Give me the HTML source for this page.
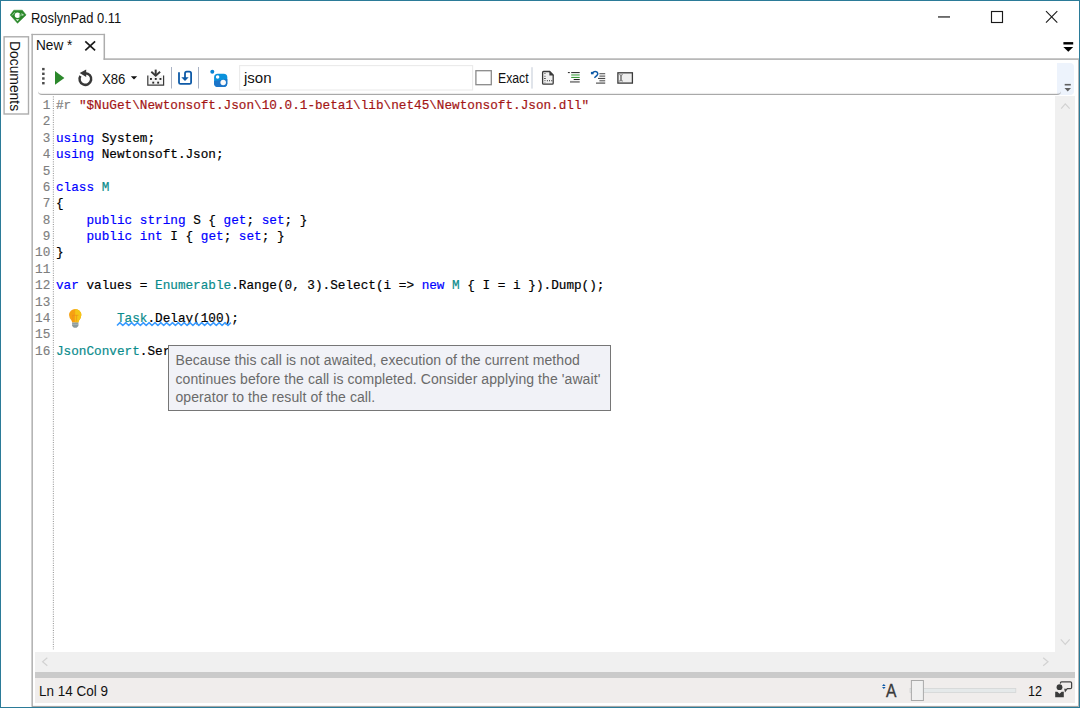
<!DOCTYPE html>
<html>
<head>
<meta charset="utf-8">
<title>RoslynPad 0.11</title>
<style>
html,body{margin:0;padding:0;}
body{width:1080px;height:708px;overflow:hidden;background:#fff;position:relative;
  font-family:"Liberation Sans",sans-serif;font-size:14px;color:#000;}
.abs{position:absolute;}
.ui{position:absolute;white-space:pre;font-family:"Liberation Sans",sans-serif;font-size:14px;line-height:16px;
  transform-origin:0 0;color:#111;}
svg{position:absolute;overflow:visible;}
/* window frame */
#frame{left:0;top:0;width:1078px;height:706px;border:1px solid #2b7b98;pointer-events:none;}
/* code */
#code{left:56px;top:98.1px;-webkit-text-stroke:0.2px;font-family:"Liberation Mono",monospace;font-size:13.6px;line-height:16.37px;
  white-space:pre;transform-origin:0 0;transform:scaleX(0.9337);color:#000;}
#nums{left:20px;top:98.1px;width:30.3px;font-family:"Liberation Mono",monospace;font-size:13.6px;line-height:16.37px;
  white-space:pre;color:#7e7e7e;text-align:right;-webkit-text-stroke:0.15px;}
#nums span{display:block;transform-origin:100% 0;transform:scaleX(0.9337);}
.k{color:#0000ff;}
.t{color:#0a8c8c;}
.s{color:#a31515;}
.g{color:#808080;}
</style>
</head>
<body>
<!-- TITLE BAR -->
<div id="titlebar" class="abs" style="left:1px;top:1px;width:1078px;height:33px;background:#fff;"></div>
<svg style="left:9px;top:9.3px" width="18" height="16" viewBox="9 9 18 16">
  <path d="M13.8 10.2 H22.3 L26.1 15 L17.5 23.3 L10.2 15 Z" fill="#2a882a" stroke="#2a882a" stroke-width="0.5" stroke-linejoin="round"/>
  <circle cx="17.5" cy="15.35" r="2.75" fill="#fff"/>
  <path d="M19.7 13.7 v3.4" stroke="#8fc78f" stroke-width="1" fill="none"/>
  <path d="M15.8 19.2 h3.4 l-1.7 2.1z" fill="#e2f1e2"/>
  <path d="M12 15.5 L14.8 12.3" stroke="#b2d9b2" stroke-width="0.9" fill="none"/>
  <path d="M21.4 13 L24.2 15 L21.6 16z" fill="#b4dab4"/>
</svg>
<div class="ui" id="t_title" style="left:31px;top:10.4px;transform:scaleX(0.922)">RoslynPad 0.11</div>
<svg style="left:930px;top:4px" width="140" height="26" viewBox="930 4 140 26">
  <rect x="938" y="16.35" width="12" height="1.2" fill="#1a1a1a"/>
  <rect x="991.5" y="11.5" width="11" height="11" fill="none" stroke="#1a1a1a" stroke-width="1.15"/>
  <path d="M1046 11.2 L1057.3 22.7 M1057.3 11.2 L1046 22.7" stroke="#1a1a1a" stroke-width="1.1" fill="none"/>
</svg>
<!-- SIDE TAB -->

<div class="ui" id="t_docs" style="left:23.2px;top:41px;transform:rotate(90deg) scaleX(0.99);">Documents</div>
<!-- DOC TAB -->

<div class="ui" id="t_new" style="left:35.5px;top:36.8px;transform:scaleX(0.975)">New *</div>
<svg style="left:84px;top:40px" width="13" height="12" viewBox="84 40 13 12">
  <path d="M85.3 41.4 L95.1 50.4 M95.1 41.4 L85.3 50.4" stroke="#1a1a1a" stroke-width="1.7" fill="none"/>
</svg>
<svg style="left:1062px;top:41px" width="13" height="12" viewBox="1062 41 13 12">
  <rect x="1063.4" y="42.1" width="9.8" height="2.4" fill="#000"/>
  <path d="M1063.4 46.9 H1073.2 L1068.3 51.8 Z" fill="#000"/>
</svg>
<!-- PANEL -->
<svg style="left:0;top:0" width="1080" height="708" viewBox="0 0 1080 708">
  <rect x="4.1" y="36.8" width="24.4" height="77.2" fill="none" stroke="#adadad" stroke-width="1.4"/>
  <g fill="#adadad">
    <rect x="31.45" y="33.85" width="73.6" height="1.25"/>
    <rect x="31.45" y="33.85" width="1.45" height="673"/>
    <rect x="103.55" y="33.85" width="1.5" height="26"/>
    <rect x="103.55" y="58.35" width="975.5" height="1.5"/>
    <rect x="32" y="705.9" width="1047" height="1" fill="#9c9c9c"/>
    <rect x="1078" y="59" width="1" height="648" fill="#b4b4b4"/>
  </g>
</svg>
<!-- TOOLBAR -->
<div class="abs" style="left:1056.5px;top:63px;width:17.5px;height:31.7px;background:#edf3fc;border-radius:0 4px 4px 0;"></div>
<div class="abs" style="left:38px;top:60px;width:1023px;height:34px;border-bottom:1.2px solid #a9a9a9;border-radius:0 0 4px 4px;background:linear-gradient(to bottom,rgba(0,0,0,0) 0,rgba(0,0,0,0) 32.4px,rgba(0,0,0,0.1) 34px);"></div>
<svg style="left:36px;top:60px" width="1040" height="36" viewBox="36 60 1040 36">
  <!-- grip -->
  <g fill="#4a4a4a">
    <rect x="42.1" y="67.9" width="2.5" height="2.4"/><rect x="42.1" y="72.6" width="2.5" height="2.4"/>
    <rect x="42.1" y="77.3" width="2.5" height="2.4"/><rect x="42.1" y="82" width="2.5" height="2.4"/>
  </g>
  <!-- play -->
  <path d="M55 71 L64.4 77.9 L55 84.8 Z" fill="#2c882c"/>
  <!-- restart -->
  <path d="M85.4 73.15 A5.85 5.85 0 1 1 80.4 75.9" stroke="#383838" stroke-width="2.5" fill="none"/>
  <path d="M79.7 72.9 L86.2 69.5 L86.2 76.9 Z" fill="#383838"/>
  <!-- dropdown arrow -->
  <path d="M130.8 76.3 H137.2 L134 79.6 Z" fill="#111"/>
  <!-- format/compile icon -->
  <path d="M147.8 75.4 V85.2 H163.6 V75.4" fill="#f4f4f4" stroke="#3a3a3a" stroke-width="1.2"/>
  <path d="M155.7 69.6 V76" stroke="#3a3a3a" stroke-width="2" fill="none"/>
  <path d="M151.3 71.8 L155.7 75.8 L160.1 71.8" stroke="#3a3a3a" stroke-width="1.9" fill="none"/>
  <g fill="#2a2a2a">
    <rect x="150" y="78" width="1.9" height="1.9"/><rect x="154.8" y="78" width="1.9" height="1.9"/><rect x="159.5" y="78" width="1.9" height="1.9"/>
    <rect x="152.3" y="81.7" width="1.9" height="1.9"/><rect x="157.2" y="81.7" width="1.9" height="1.9"/>
  </g>
  <!-- sep -->
  <rect x="171" y="67" width="1" height="21.5" fill="#a9b2c4"/>
  <!-- save/import blue icon -->
  <path d="M179 72.3 V82.4 Q179 83.9 180.5 83.9 H189.6 Q191.1 83.9 191.1 82.4 V73.4 Q191.1 71.6 189.3 71.6 H186.8 Q185 71.6 185 73.4 V78" stroke="#0e5aa7" stroke-width="1.8" fill="none"/>
  <path d="M181.3 77.2 H188.7 L185 80.9 Z" fill="#0e5aa7"/>
  <rect x="198" y="67" width="1" height="21.5" fill="#a9b2c4"/>
  <!-- nuget -->
  <circle cx="212.3" cy="71.7" r="2" fill="#0a84d4"/>
  <rect x="214.1" y="73.7" width="13.2" height="13.2" rx="3.6" fill="#0a92dc"/>
  <path d="M214.1 81 L227.3 79 V83.3 Q227.3 86.9 223.7 86.9 H217.7 Q214.1 86.9 214.1 83.3 Z" fill="#1b74c8"/>
  <circle cx="217.6" cy="77" r="1.75" fill="#fff"/>
  <circle cx="223.2" cy="82.6" r="2.75" fill="#fafafa"/>
  <!-- search box -->
  <rect x="239.6" y="65.6" width="233" height="24.4" fill="#fff" stroke="#ebebeb" stroke-width="1.1"/>
  <!-- checkbox -->
  <rect x="475.9" y="70.7" width="15.4" height="14" fill="#fff" stroke="#8a8a8a" stroke-width="1.3"/>
  <rect x="531.5" y="67.2" width="1" height="21.4" fill="#c2c9d6"/>
  <!-- doc icon -->
  <path d="M543.6 71.5 H549.7 L553.2 75 V83.2 Q553.2 84.2 552.2 84.2 H543.6 Q542.6 84.2 542.6 83.2 V72.5 Q542.6 71.5 543.6 71.5 Z" fill="#f0f0f0" stroke="#3a3a3a" stroke-width="1.3"/>
  <path d="M549.4 71.2 L553.6 75.4 H549.4 Z" fill="#3a3a3a"/>
  <g fill="#8a8a8a">
    <rect x="544" y="73.1" width="1.8" height="0.9"/><rect x="544" y="75.8" width="1.8" height="0.9"/>
    <rect x="544" y="78.1" width="1.8" height="0.9" fill="#444"/><rect x="544" y="80.2" width="1.8" height="0.9"/>
    <rect x="546.9" y="80" width="0.9" height="1.3" fill="#444"/><rect x="549.1" y="80" width="0.9" height="1.3" fill="#444"/><rect x="551.3" y="80" width="0.9" height="1.3" fill="#444"/>
    <rect x="544" y="82.6" width="1.8" height="0.8"/>
  </g>
  <!-- comment icon -->
  <rect x="567.9" y="72.1" width="1.9" height="1" fill="#222"/>
  <rect x="571.2" y="72.1" width="8.5" height="1" fill="#222"/>
  <rect x="571.2" y="74" width="8.5" height="1.9" fill="#93c893"/>
  <rect x="571.2" y="76.9" width="8.5" height="1.1" fill="#3a9a3a"/>
  <rect x="573.7" y="79" width="6" height="1" fill="#222"/>
  <rect x="570" y="80.9" width="9.7" height="1.9" fill="#8c8c8c"/>
  <!-- uncomment icon -->
  <path d="M592.3 73 Q594.5 70.6 596.7 71.9 Q598.6 73.4 597 75.4 L594.4 77.8" stroke="#0e5aa7" stroke-width="1.5" fill="none"/>
  <path d="M590.9 71.9 H593.6 V74.3 H590.9 Z" fill="#0e5aa7"/>
  <rect x="599.4" y="73" width="5.8" height="1" fill="#707070"/>
  <rect x="599.4" y="74.4" width="5.8" height="1.4" fill="#b4b4b4"/>
  <rect x="599.4" y="75.8" width="5.8" height="1" fill="#707070"/>
  <rect x="598" y="77.9" width="7.2" height="1" fill="#333"/>
  <rect x="599.4" y="79.9" width="5.8" height="1" fill="#707070"/>
  <rect x="599.4" y="81.2" width="5.8" height="1.2" fill="#b4b4b4"/>
  <rect x="596" y="82.4" width="9.2" height="1.5" fill="#777"/>
  <!-- rename icon -->
  <rect x="617.9" y="72.8" width="14.5" height="10.3" fill="#efefef" stroke="#3a3a3a" stroke-width="1.3"/>
  <path d="M619.2 74.5 Q621 74.7 621 76.2 V79.4 Q621 80.9 619.2 81.1 M622.8 74.5 Q621 74.7 621 76.2 M621 79.4 Q621 80.9 622.8 81.1" stroke="#808080" stroke-width="1.1" fill="none"/><path d="M621 75 V80.6" stroke="#808080" stroke-width="1.3"/>
  <!-- overflow -->
  <rect x="1064.7" y="83.9" width="6.1" height="1.6" fill="#606060"/>
  <path d="M1064.5 88.1 H1071 L1067.75 91.5 Z" fill="#606060"/>
</svg>
<div class="ui" id="t_x86" style="left:101.5px;top:70.5px;transform:scaleX(0.94)">X86</div>
<div class="ui" id="t_json" style="left:243.6px;top:69.4px;font-size:15.5px;line-height:18px;transform:scaleX(0.97)">json</div>
<div class="ui" id="t_exact" style="left:498px;top:69.8px;transform:scaleX(0.875)">Exact</div>
<!-- EDITOR -->
<div class="abs" style="left:35px;top:96px;width:1020px;height:556px;background:#fff;"></div>
<svg style="left:52px;top:96px" width="3" height="554" viewBox="52 96 3 554"><path d="M53.35 96.4 V649.3" stroke="#8e8e8e" stroke-width="1" stroke-dasharray="1 1.32" fill="none"/></svg>
<div id="nums" class="abs"><span>1</span><span>2</span><span>3</span><span>4</span><span>5</span><span>6</span><span>7</span><span>8</span><span>9</span><span>10</span><span>11</span><span>12</span><span>13</span><span>14</span><span>15</span><span>16</span></div>
<div id="code" class="abs"><span class="g">#r</span> <span class="s">"$NuGet\Newtonsoft.Json\10.0.1-beta1\lib\net45\Newtonsoft.Json.dll"</span>

<span class="k">using</span> System;
<span class="k">using</span> Newtonsoft.Json;

<span class="k">class</span> <span class="t">M</span>
{
    <span class="k">public</span> <span class="k">string</span> S { <span class="k">get</span>; <span class="k">set</span>; }
    <span class="k">public</span> <span class="k">int</span> I { <span class="k">get</span>; <span class="k">set</span>; }
}

<span class="k">var</span> values = <span class="t">Enumerable</span>.Range(0, 3).Select(i =&gt; <span class="k">new</span> <span class="t">M</span> { I = i }).Dump();

        <span class="t">Task</span>.Delay(100);

<span class="t">JsonConvert</span>.Ser</div>
<svg style="left:66px;top:306px" width="170" height="24" viewBox="66 306 170 24">
  <polyline points="117.0,325.5 119.9,322.6 122.8,325.5 125.8,322.6 128.7,325.5 131.6,322.6 134.5,325.5 137.4,322.6 140.4,325.5 143.3,322.6 146.2,325.5 149.1,322.6 152.0,325.5 155.0,322.6 157.9,325.5 160.8,322.6 163.7,325.5 166.6,322.6 169.6,325.5 172.5,322.6 175.4,325.5 178.3,322.6 181.2,325.5 184.2,322.6 187.1,325.5 190.0,322.6 192.9,325.5 195.8,322.6 198.8,325.5 201.7,322.6 204.6,325.5 207.5,322.6 210.4,325.5 213.4,322.6 216.3,325.5 219.2,322.6 222.1,325.5 225.0,322.6 228.0,325.5 230.9,322.6" fill="none" stroke="#3a9bff" stroke-width="1.5" stroke-linejoin="round"/>
  <!-- light bulb -->
  <path d="M75.2 308.9 A6.15 6.15 0 0 0 69.05 315.1 Q69.2 318 71.3 320.3 Q72.1 321.4 72.1 322.6 H78.4 Q78.4 321.4 79.2 320.3 Q81.2 318 81.35 315.1 A6.15 6.15 0 0 0 75.2 308.9 Z" fill="#f6a112"/>
  <path d="M75.2 308.9 A6.15 6.15 0 0 1 81.35 315.1 Q81.2 318 79.2 320.3 Q78.4 321.4 78.4 322.6 H75.2 Z" fill="#f5c516"/>
  <path d="M72.3 315.3 H78.4 M72.8 315.3 V321.5 M76.6 315.3 V321.5" stroke="#ee8a1c" stroke-width="0.8" fill="none" opacity="0.8"/>
  <path d="M72.1 322.6 H78.4 V326 L76.6 327.7 H73.9 L72.1 326 Z" fill="#8b9a9c"/>
  <path d="M72.1 324.3 H78.4" stroke="#b4c0c2" stroke-width="0.7"/>
</svg>
<!-- TOOLTIP -->
<div class="abs" id="tip" style="left:167.5px;top:344.7px;width:443px;height:66.5px;box-sizing:border-box;border:1px solid #767676;background:#f1f2f7;"></div>
<div class="ui" id="t_tip" style="left:175.5px;top:350.6px;font-size:14px;line-height:18.9px;letter-spacing:0.08px;color:#6a6a6a;">Because this call is not awaited, execution of the current method
continues before the call is completed. Consider applying the 'await'
operator to the result of the call.</div>
<!-- SCROLLBARS -->
<div class="abs" style="left:1055.3px;top:96.2px;width:20px;height:576px;background:#f0f0f0;"></div>
<div class="abs" style="left:35.3px;top:652px;width:1040px;height:20.2px;background:#f0f0f0;"></div>
<svg style="left:35px;top:96px" width="1041" height="577" viewBox="35 96 1041 577">
  <g fill="none" stroke="#d2d2d2" stroke-width="1.2">
    <path d="M1061.2 108.7 L1065.25 103.8 L1069.7 108.7"/>
    <path d="M1060.8 639.4 L1065.25 644.3 L1069.7 639.4"/>
    <path d="M47.3 657.8 L42.6 661.8 L47.3 665.8"/>
    <path d="M1043.2 657.8 L1048 661.8 L1043.2 665.8"/>
  </g>
</svg>
<!-- STATUS -->
<div class="abs" style="left:35.3px;top:672.2px;width:1039.7px;height:5.4px;background:#cacaca;"></div>
<div class="abs" style="left:35.3px;top:677.6px;width:1039.7px;height:25.3px;background:#f0edec;"></div>
<div class="ui" id="t_ln" style="left:38.8px;top:683.2px;transform:scaleX(0.962)">Ln 14 Col 9</div>
<div class="ui" id="t_12" style="left:1027.8px;top:682.5px;transform:scaleX(0.9)">12</div>
<div class="ui" id="t_A" style="left:886px;top:680.3px;font-size:18.6px;line-height:22px;color:#3a3a3a;transform:scaleX(0.84);-webkit-text-stroke:0.35px #3a3a3a;">A</div>
<svg style="left:880px;top:678px" width="196" height="26" viewBox="880 678 196 26">
  <path d="M882 686.1 L883.85 684 L885.7 686.1 Z M882 687 L883.85 689.1 L885.7 687 Z" fill="#0e5aa7"/>
  <rect x="910" y="688.5" width="105.8" height="4" fill="#e5e9ea" stroke="#d4d6d6" stroke-width="0.8"/>
  <rect x="911.4" y="680.5" width="12" height="20" fill="#f0f0f0" stroke="#a9a9a9" stroke-width="1"/>
  <!-- feedback -->
  <path d="M1062.3 688.8 H1061.6 Q1060.4 688.8 1060.4 687.6 V683 Q1060.4 681.8 1061.6 681.8 H1070.4 Q1071.6 681.8 1071.6 683 V687.4 Q1071.6 688.6 1070.4 688.6 H1067.3 L1065.3 691 L1064.8 688.7" fill="none" stroke="#444" stroke-width="1.25"/>
  <circle cx="1059.5" cy="687.2" r="3.7" fill="#f0edec"/>
  <circle cx="1059.5" cy="687.2" r="2.9" fill="#3a3a3a"/>
  <path d="M1055.2 691.8 H1057.3 L1059.5 693.8 L1061.7 691.8 H1063.8 V697.3 H1055.2 Z" fill="#3a3a3a"/>
</svg>
<div id="frame" class="abs"></div>
</body>
</html>
